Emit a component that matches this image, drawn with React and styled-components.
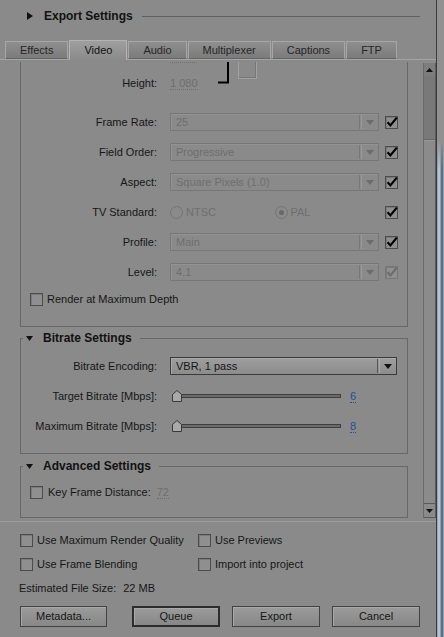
import React, { useLayoutEffect, useRef } from 'react';
import styled, { createGlobalStyle, css } from 'styled-components';

const C = {
  bg: '#8a8a8a',
  text: '#161616',
  dim: '#6e6e6e',
};

const GlobalStyle = createGlobalStyle`
  html, body { margin: 0; padding: 0; background: ${C.bg}; }
  body {
    font-family: "Liberation Sans", Arial, sans-serif;
    font-size: 11px;
    line-height: 13px;
    color: ${C.text};
    overflow: hidden;
  }
  * { box-sizing: border-box; }
`;

const Window = styled.div`
  display: flex;
  width: 444px;
  height: 637px;
  background: ${C.bg};
`;

const Main = styled.div`
  width: 437px;
  border-right: 1px solid #3c3c3c;
  display: flex;
  flex-direction: column;
`;

const Edge = styled.div`
  flex: 1;
  background:
    linear-gradient(to bottom, #919191 0, #919191 140px, rgba(145, 145, 145, 0) 170px),
    linear-gradient(to right, #7d92a8 0, #c9d6e3 2px, #7a8ea3 4px, #44525f 5px, #a9bdd0 7px);
`;

/* ---------- header ---------- */
const Header = styled.div`
  height: 32px;
  display: flex;
  align-items: center;
  padding: 0 16px 0 27px;
`;

const HeaderTitle = styled.span`
  font-weight: bold;
  font-size: 12px;
  margin-left: 11px;
  color: #121212;
`;

const HeaderRule = styled.div`
  flex: 1;
  height: 1px;
  background: #606060;
  margin-left: 9px;
`;

/* ---------- tabs ---------- */
const TabBar = styled.div`
  margin-top: 8px;
  height: 20px;
  display: flex;
  align-items: flex-end;
  gap: 1px;
  padding-left: 5px;
  border-bottom: 1px solid #a4a4a4;
`;

const Tab = styled.div`
  height: 18px;
  padding: 0 14px;
  display: flex;
  align-items: center;
  justify-content: center;
  border: 1px solid #a6a6a6;
  border-bottom-color: #666;
  background: linear-gradient(#8f8f8f, #7b7b7b);
  color: #262626;
  ${(p) =>
    p.$active &&
    css`
      height: 20px;
      margin-bottom: -1px;
      border-color: #b3b3b3;
      border-bottom: none;
      background: linear-gradient(#9f9f9f, #8a8a8a);
      color: #111;
    `}
`;

/* ---------- scroll area ---------- */
const Viewport = styled.div`
  display: flex;
  height: 458px;
  margin-top: 2px;
`;

const ScrollPane = styled.div`
  flex: 1;
  overflow: hidden;
`;

const ScrollInner = styled.div`
  padding-bottom: 10px;
`;

const ScrollBar = styled.div`
  width: 13px;
  margin: 1px 0 2px;
  display: flex;
  flex-direction: column;
  border-left: 1px solid #6a6a6a;
  border-right: 1px solid #5a5a5a;
  background: #8b8b8b;
`;

const ScrollBtn = styled.div`
  height: ${(p) => p.$h}px;
  display: flex;
  align-items: center;
  justify-content: center;
  background: ${(p) => (p.$down ? '#8a8a8a' : '#7d7d7d')};
  border-top: 1px solid ${(p) => (p.$down ? '#5a5a5a' : '#7d7d7d')};
  border-bottom: 1px solid ${(p) => (p.$down ? '#5a5a5a' : '#7d7d7d')};
`;

const Thumb = styled.div`
  height: 64px;
  background: #797979;
  border-bottom: 1px solid #666;
`;

const Track = styled.div`
  flex: 1;
  border-top: 1px solid #9a9a9a;
`;

/* ---------- sections ---------- */
const Section = styled.fieldset`
  margin: ${(p) => p.$mt}px 15px 0 20px;
  padding: ${(p) => p.$pad};
  border: 1px solid #676767;
  min-width: 0;
`;

const Legend = styled.legend`
  display: flex;
  align-items: center;
  gap: 10px;
  height: 16px;
  padding: 0 8px 0 3px;
  margin-left: 2px;
  font-weight: bold;
  font-size: 12px;
  color: #121212;
`;

const Row = styled.div`
  display: flex;
  align-items: center;
  height: ${(p) => p.$h || 30}px;
  padding-left: ${(p) => p.$indent || 0}px;
  margin-top: ${(p) => p.$mt || 0}px;
`;

const Label = styled.span`
  width: 136px;
  flex-shrink: 0;
  text-align: right;
  margin-right: 13px;
  white-space: nowrap;
`;

const DimGrid = styled.div`
  display: grid;
  grid-template-columns: 136px 61px 20px 19px;
  grid-template-rows: 26px 26px;
  align-items: center;
`;

const DimLabel = styled.span`
  grid-column: 1;
  grid-row: ${(p) => p.$row};
  text-align: right;
  white-space: nowrap;
`;

const DimValue = styled.div`
  grid-column: 2;
  grid-row: ${(p) => p.$row};
  padding-left: 13px;
  display: flex;
`;

/* the part of the width field still visible at the top of the scrolled pane */
const ClippedField = styled.span`
  width: 27px;
  height: 12px;
  border-bottom: 1px dotted ${C.dim};
`;

const Bracket = styled.svg`
  grid-column: 3;
  grid-row: 1 / span 2;
  align-self: center;
`;

const LinkButton = styled.div`
  grid-column: 4;
  grid-row: 1 / span 2;
  align-self: center;
  width: 19px;
  height: 18px;
  border: 1px solid #a2a2a2;
  box-shadow: inset -1px -1px 0 #777;
`;

const HotText = styled.span`
  color: ${(p) => (p.$blue ? '#1d4f9e' : C.dim)};
  border-bottom: 1px dotted currentColor;
  line-height: 12px;
`;

/* ---------- select ---------- */
const Select = styled.div`
  width: ${(p) => p.$w}px;
  height: 18px;
  flex-shrink: 0;
  display: flex;
  align-items: center;
  border: 1px solid ${(p) => (p.$disabled ? '#777' : '#3a3a3a')};
  background: ${(p) => (p.$disabled ? 'transparent' : 'linear-gradient(#9e9e9e, #8c8c8c)')};
  box-shadow: inset 1px 1px 0 ${(p) => (p.$disabled ? '#939393' : '#aaa')};
  color: ${(p) => (p.$disabled ? C.dim : C.text)};
`;

const SelectValue = styled.span`
  flex: 1;
  padding-left: 5px;
  white-space: nowrap;
  overflow: hidden;
`;

const SelectDivider = styled.span`
  width: 3px;
  height: 14px;
  border-left: 1px solid ${(p) => (p.$disabled ? '#777' : '#555')};
  border-right: 1px solid ${(p) => (p.$disabled ? '#9a9a9a' : '#aaa')};
`;

const SelectArrow = styled.span`
  width: 16px;
  display: flex;
  justify-content: center;
`;

/* ---------- checkbox / radio ---------- */
const Box = styled.span`
  width: 13px;
  height: 13px;
  flex-shrink: 0;
  display: inline-flex;
  align-items: center;
  justify-content: center;
  border: 1px solid ${(p) => (p.$disabled ? '#777' : '#4c4c4c')};
  background: #8f8f8f;
  box-shadow: inset 1px 1px 0 #7a7a7a;
  margin-left: ${(p) => p.$ml || 0}px;
  svg { overflow: visible; }
`;

const Radio = styled.span`
  width: 13px;
  height: 13px;
  border-radius: 50%;
  border: 1px solid #747474;
  display: inline-flex;
  align-items: center;
  justify-content: center;
`;

const RadioDot = styled.span`
  width: 5px;
  height: 5px;
  border-radius: 50%;
  background: #686868;
`;

const RadioGroup = styled.div`
  width: 209px;
  display: flex;
  flex-shrink: 0;
`;

const RadioOption = styled.div`
  width: 105px;
  display: flex;
  align-items: center;
  gap: 3px;
  color: ${C.dim};
`;

const CheckText = styled.span`
  margin-left: ${(p) => p.$gap || 4}px;
  white-space: nowrap;
`;

/* ---------- slider ---------- */
const Slider = styled.div`
  position: relative;
  width: 169px;
  height: 12px;
  margin-left: 2px;
  display: flex;
  align-items: center;
  flex-shrink: 0;
`;

const SliderTrack = styled.div`
  width: 100%;
  height: 4px;
  border: 1px solid #3f3f3f;
  background: #6b6b6b;
`;

const SliderThumb = styled.svg`
  position: absolute;
  left: 0;
  top: 0;
`;

const SliderValue = styled.span`
  margin-left: 9px;
`;

/* ---------- footer ---------- */
const Footer = styled.div`
  margin-top: 1px;
  border-top: 1px solid #9c9c9c;
  padding: 6px 16px 0 20px;
`;

const OptionGrid = styled.div`
  display: grid;
  grid-template-columns: 178px auto;
  grid-auto-rows: 24px;
  align-items: center;
`;

const Option = styled.div`
  display: flex;
  align-items: center;
`;

const SizeRow = styled.div`
  height: 24px;
  display: flex;
  align-items: center;
  gap: 7px;
  margin-left: -1px;
`;

const ButtonRow = styled.div`
  margin-top: 6px;
  display: flex;
`;

const Button = styled.button`
  width: ${(p) => p.$w || 88}px;
  height: 21px;
  margin-left: ${(p) => p.$ml || 0}px;
  padding: 0;
  font: inherit;
  color: #161616;
  border: ${(p) => (p.$default ? '2px solid #2c2c2c' : '1px solid #424242')};
  background: linear-gradient(#9b9b9b, #878787);
  box-shadow: inset 1px 1px 0 #a9a9a9;
`;

/* ---------- small drawings ---------- */
const TriRight = () => (
  <svg width="6" height="8" viewBox="0 0 6 8">
    <polygon points="0,0 6,4 0,8" fill="#111" />
  </svg>
);

const TriDown = ({ color = '#111', w = 7, h = 5 }) => (
  <svg width={w} height={h} viewBox={`0 0 ${w} ${h}`}>
    <polygon points={`0,0 ${w},0 ${w / 2},${h}`} fill={color} />
  </svg>
);

const TriUp = () => (
  <svg width="7" height="4" viewBox="0 0 7 4">
    <polygon points="0,4 7,4 3.5,0" fill="#111" />
  </svg>
);

const Tick = ({ disabled }) => (
  <svg width="11" height="11" viewBox="0 0 11 11">
    <path
      d="M1.6 5.2 L4.4 8.4 L10.8 0.6"
      fill="none"
      stroke={disabled ? '#6c6c6c' : '#000'}
      strokeWidth="2.2"
    />
  </svg>
);

const Check = ({ on = false, disabled, ml }) => (
  <Box $disabled={disabled} $ml={ml}>
    {on && <Tick disabled={disabled} />}
  </Box>
);

const Dropdown = ({ value, w = 209, disabled }) => (
  <Select $w={w} $disabled={disabled}>
    <SelectValue>{value}</SelectValue>
    <SelectDivider $disabled={disabled} />
    <SelectArrow>
      <TriDown color={disabled ? '#6c6c6c' : '#111'} w={8} h={5} />
    </SelectArrow>
  </Select>
);

const BitrateSlider = ({ value }) => (
  <>
    <Slider>
      <SliderTrack />
      <SliderThumb width="11" height="12" viewBox="0 0 11 12">
        <polygon points="0.5,4.5 5,0.5 9.5,4.5 9.5,11.5 0.5,11.5" fill="#a9a9a9" stroke="#3a3a3a" />
      </SliderThumb>
    </Slider>
    <SliderValue>
      <HotText $blue>{value}</HotText>
    </SliderValue>
  </>
);

const tabs = ['Effects', 'Video', 'Audio', 'Multiplexer', 'Captions', 'FTP'];

const videoRows = [
  { label: 'Frame Rate:', value: '25' },
  { label: 'Field Order:', value: 'Progressive' },
  { label: 'Aspect:', value: 'Square Pixels (1.0)' },
];

export default function App() {
  const paneRef = useRef(null);
  useLayoutEffect(() => {
    if (paneRef.current) paneRef.current.scrollTop = 42;
  }, []);

  return (
    <>
      <GlobalStyle />
      <Window>
        <Main>
          <Header>
            <TriRight />
            <HeaderTitle>Export Settings</HeaderTitle>
            <HeaderRule />
          </Header>

          <TabBar>
            {tabs.map((t) => (
              <Tab key={t} $active={t === 'Video'}>
                {t}
              </Tab>
            ))}
          </TabBar>

          <Viewport>
            <ScrollPane ref={paneRef}>
              <ScrollInner>
                <Section $mt={4} $pad="19px 0 15px 0">
                  <DimGrid>
                    <DimValue $row={1}>
                      <ClippedField />
                    </DimValue>
                    <DimLabel $row={2}>Height:</DimLabel>
                    <DimValue $row={2}>
                      <HotText>1 080</HotText>
                    </DimValue>
                    <Bracket width="12" height="28" viewBox="0 0 12 28">
                      <path d="M0 1.5 H10 V26.5 H0" fill="none" stroke="#000" strokeWidth="2" />
                    </Bracket>
                    <LinkButton />
                  </DimGrid>

                  {videoRows.map((r, i) => (
                    <Row key={r.label} $mt={i === 0 ? 11 : 0}>
                      <Label>{r.label}</Label>
                      <Dropdown value={r.value} disabled />
                      <Check on ml={6} />
                    </Row>
                  ))}

                  <Row>
                    <Label>TV Standard:</Label>
                    <RadioGroup>
                      <RadioOption>
                        <Radio />
                        NTSC
                      </RadioOption>
                      <RadioOption>
                        <Radio>
                          <RadioDot />
                        </Radio>
                        PAL
                      </RadioOption>
                    </RadioGroup>
                    <Check on ml={6} />
                  </Row>

                  <Row>
                    <Label>Profile:</Label>
                    <Dropdown value="Main" disabled />
                    <Check on ml={6} />
                  </Row>

                  <Row>
                    <Label>Level:</Label>
                    <Dropdown value="4.1" disabled />
                    <Check on disabled ml={6} />
                  </Row>

                  <Row $h={24} $indent={9}>
                    <Check />
                    <CheckText>Render at Maximum Depth</CheckText>
                  </Row>
                </Section>

                <Section $mt={3} $pad="5px 0 12px 0">
                  <Legend>
                    <TriDown />
                    Bitrate Settings
                  </Legend>
                  <Row>
                    <Label>Bitrate Encoding:</Label>
                    <Dropdown value="VBR, 1 pass" w={227} />
                  </Row>
                  <Row>
                    <Label>Target Bitrate [Mbps]:</Label>
                    <BitrateSlider value="6" />
                  </Row>
                  <Row>
                    <Label>Maximum Bitrate [Mbps]:</Label>
                    <BitrateSlider value="8" />
                  </Row>
                </Section>

                <Section $mt={4} $pad="6px 0 13px 0">
                  <Legend>
                    <TriDown />
                    Advanced Settings
                  </Legend>
                  <Row $h={24} $indent={9}>
                    <Check />
                    <CheckText $gap={5}>Key Frame Distance:</CheckText>
                    <CheckText $gap={6}>
                      <HotText>72</HotText>
                    </CheckText>
                  </Row>
                </Section>
              </ScrollInner>
            </ScrollPane>

            <ScrollBar>
              <ScrollBtn $h={13}>
                <TriUp />
              </ScrollBtn>
              <Thumb />
              <Track />
              <ScrollBtn $h={15} $down>
                <TriDown w={7} h={4} />
              </ScrollBtn>
            </ScrollBar>
          </Viewport>

          <Footer>
            <OptionGrid>
              <Option>
                <Check />
                <CheckText>Use Maximum Render Quality</CheckText>
              </Option>
              <Option>
                <Check />
                <CheckText>Use Previews</CheckText>
              </Option>
              <Option>
                <Check />
                <CheckText>Use Frame Blending</CheckText>
              </Option>
              <Option>
                <Check />
                <CheckText>Import into project</CheckText>
              </Option>
            </OptionGrid>
            <SizeRow>
              <span>Estimated File Size:</span>
              <span>22 MB</span>
            </SizeRow>
            <ButtonRow>
              <Button $w={87}>Metadata...</Button>
              <Button $ml={25} $default>
                Queue
              </Button>
              <Button $ml={12}>Export</Button>
              <Button $ml={12}>Cancel</Button>
            </ButtonRow>
          </Footer>
        </Main>
        <Edge />
      </Window>
    </>
  );
}
